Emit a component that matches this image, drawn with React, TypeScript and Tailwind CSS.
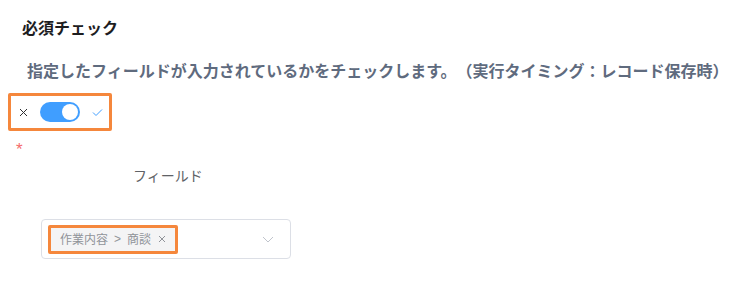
import React from "react";

export default function App() {
  return (
    <div
      className="w-[743px] h-[296px] bg-white overflow-hidden"
      style={{ fontFamily: '"Noto Sans CJK JP", "Noto Sans", sans-serif' }}
    >
      <div className="pl-[22px] pt-[15px] text-[16px] leading-[24px] font-bold text-[#1d1d1f]">
        必須チェック
      </div>
      <div className="pl-[27px] mt-[19px] text-[16px] leading-[24px] font-bold text-[#5f6b7e] whitespace-nowrap [text-spacing-trim:space-all]">
        指定したフィールドが入力されているかをチェックします。（実行タイミング：レコード保存時）
      </div>
      <div className="ml-[8px] mt-[11px] w-[104px] h-[38px] border-[3px] border-[#f5873c] rounded-[2px] flex items-center">
        <svg className="ml-[8px]" width="9" height="9" viewBox="0 0 9 9">
          <path d="M1 1 L8 8 M8 1 L1 8" stroke="#303133" strokeWidth="1" fill="none" />
        </svg>
        <div className="ml-[12px] w-[40px] h-[20px] rounded-full bg-[#409eff] flex items-center justify-end pr-[2px]">
          <div className="w-[16px] h-[16px] rounded-full bg-white" />
        </div>
        <svg className="ml-[12px]" width="11" height="9" viewBox="0 0 11 9">
          <path d="M1 4.5 L4 7.5 L10 1.5" stroke="#409eff" strokeWidth="1" fill="none" />
        </svg>
      </div>
      <div
        className="ml-[16px] mt-[9px] h-[20px] text-[17px] leading-[20px] text-[#f56c6c]"
        style={{ fontFamily: '"Liberation Sans", Arial, sans-serif' }}
      >
        *
      </div>
      <div className="ml-[133px] mt-[5px] text-[14px] leading-[20px] text-[#606266]">フィールド</div>
      <div className="ml-[41px] mt-[34px] w-[250px] h-[40px] border border-[#dcdfe6] rounded-[4px] flex items-center pl-[6px] pr-[16px]">
        <div className="h-[29px] border-[3px] border-[#f5873c] rounded-[2px] flex items-center bg-[#f4f4f5] pl-[9px] pr-[9px] text-[12px] leading-[20px] text-[#909399]">
          <span>作業内容</span>
          <span className="ml-[6px]" style={{ fontFamily: '"Liberation Sans", Arial, sans-serif' }}>&gt;</span>
          <span className="ml-[6px]">商談</span>
          <svg className="ml-[7px]" width="8" height="8" viewBox="0 0 8 8">
            <path d="M1 1 L7 7 M7 1 L1 7" stroke="#909399" strokeWidth="1" fill="none" />
          </svg>
        </div>
        <div className="flex-1" />
        <svg width="12" height="7" viewBox="0 0 12 7">
          <path d="M1 1 L6 6 L11 1" stroke="#c0c4cc" strokeWidth="1" fill="none" />
        </svg>
      </div>
    </div>
  );
}
